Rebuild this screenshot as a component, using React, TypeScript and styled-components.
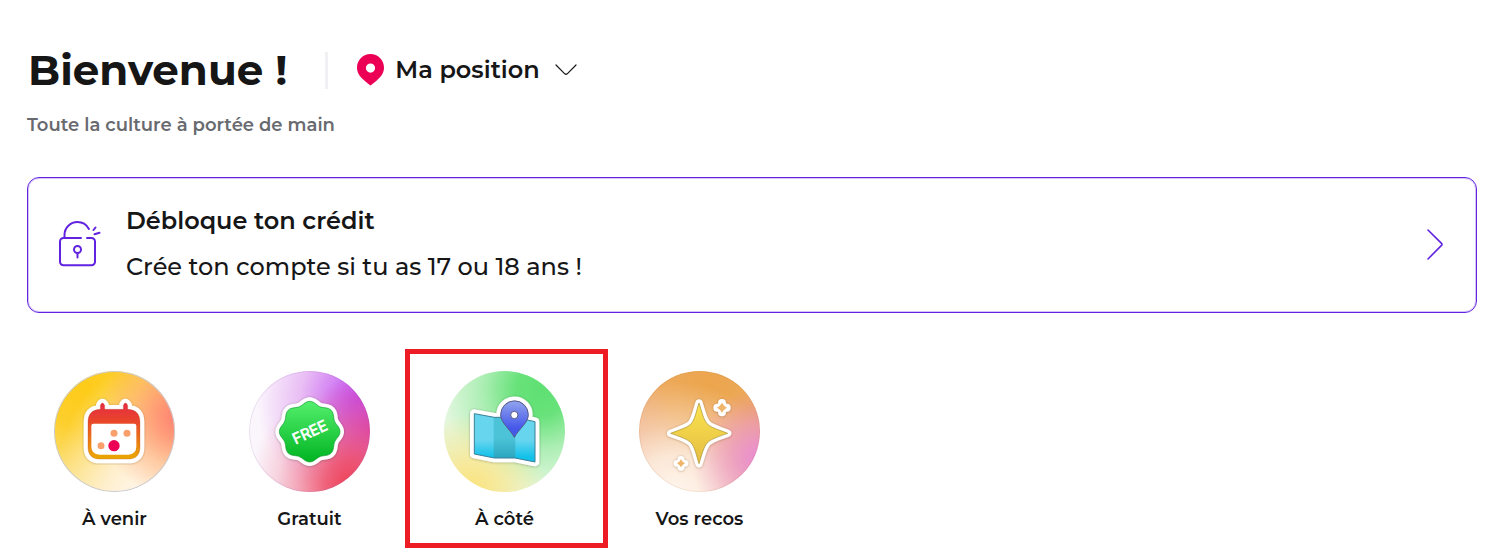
import React from 'react';
import styled, { createGlobalStyle } from 'styled-components';

const GlobalStyle = createGlobalStyle`
  * { box-sizing: border-box; }
  body {
    margin: 0;
    background: #fff;
    color: #161617;
    font-family: Montserrat, Inter, "Liberation Sans", sans-serif;
  }
  button { font: inherit; color: inherit; cursor: pointer; }
  h1, h2, p { margin: 0; }
  svg { display: block; flex: none; }
`;

const Page = styled.main`
  padding: 41px 15px 10px 27px;
`;

const Header = styled.header`
  display: flex;
  align-items: center;
`;

const Title = styled.h1`
  padding-left: 1px;
  font-size: 42px;
  line-height: 58px;
  font-weight: 700;
`;

const LocationButton = styled.button`
  display: flex;
  align-items: center;
  gap: 11px;
  height: 37px;
  margin-left: 38px;
  padding: 0 0 0 29px;
  border: 0;
  border-left: 3px solid #f1f1f4;
  background: none;
  && { font-size: 24px; line-height: 32px; font-weight: 600; }

  svg:last-child { margin-left: 4px; }
`;

const Subtitle = styled.p`
  margin-top: 14px;
  font-size: 18px;
  line-height: 24px;
  font-weight: 600;
  color: #696a6f;
`;

const Banner = styled.button`
  display: flex;
  align-items: center;
  width: 100%;
  min-height: 136px;
  margin-top: 40px;
  padding: 22px 33px 24px 31px;
  border: 1px solid #6123df;
  border-radius: 12px;
  outline: 1px solid #6123df44;
  outline-offset: -2px;
  background: none;
  text-align: left;
`;

const BannerText = styled.span`
  display: flex;
  flex: 1;
  flex-direction: column;
  gap: 14px;
  margin-left: 25px;
`;

const BannerLine = styled.span<{ $strong?: boolean }>`
  font-size: 24px;
  line-height: 32px;
  font-weight: ${({ $strong }) => ($strong ? 600 : 500)};
`;

const Categories = styled.nav`
  display: flex;
  margin: 36px 0 0 -10px;
`;

const Category = styled.button<{ $selected?: boolean }>`
  position: relative;
  display: flex;
  flex-direction: column;
  align-items: center;
  gap: 15px;
  width: 195px;
  padding: 22px 0 17px;
  border: 0;
  background: none;
  && { font-size: 18px; line-height: 24px; font-weight: 600; }

  &::after {
    content: '';
    display: ${({ $selected }) => ($selected ? 'block' : 'none')};
    position: absolute;
    inset: 0 -6px 0 -2px;
    border: 5px solid #ed1c24;
  }
`;

const Disc = styled.span<{ $background: string; $edge?: string }>`
  width: 121px;
  height: 121px;
  overflow: hidden;
  border-radius: 50%;
  background: ${({ $background }) => $background};
  box-shadow: inset 0 0 0 1px ${({ $edge }) => $edge ?? 'transparent'};
`;

const Pin = () => (
  <svg width="27" height="32" viewBox="0 0 27 32" aria-hidden="true">
    <path
      fill="#eb0055"
      fillRule="evenodd"
      d="M13.5 0C6 0 0 6 0 13.6c0 5.6 3 9 6.500 12.200 2.800 2.600 4.500 3.700 5.900 5q1.100 1 2.200 0c1.400-1.300 3.100-2.400 5.900-5C24 22.600 27 19.200 27 13.600 27 6 21 0 13.500 0zm0 9.500a4.600 4.600 0 1 1 0 9.200 4.600 4.600 0 0 1 0-9.200z"
    />
  </svg>
);

const ChevronDown = () => (
  <svg width="22" height="12" viewBox="0 0 22 12" fill="none" stroke="#161617" strokeWidth="1.200" strokeLinecap="round" aria-hidden="true">
    <path d="m1 1 8.800 8.800q1.200 1.100 2.400 0L21 1" />
  </svg>
);

const ChevronRight = () => (
  <svg width="16" height="32" viewBox="0 0 16 32" fill="none" stroke="#6123df" strokeWidth="1.600" strokeLinecap="round" aria-hidden="true">
    <path d="m1 2 13.500 13.400q.9 1 0 2L1 31" />
  </svg>
);

const OpenLock = () => (
  <svg width="42" height="48" viewBox="0 0 42 48" fill="none" stroke="#6123df" strokeWidth="2" strokeLinecap="round" aria-hidden="true">
    <path d="M22 18H4.500A3.500 3.500 0 0 0 1 21.500v20.300a3.500 3.500 0 0 0 3.500 3.500h28a3.500 3.500 0 0 0 3.500-3.500V21.500a3.500 3.500 0 0 0-3.500-3.500H28" />
    <path d="M5.500 18v-3C5.500 7.500 11.500 2 18.500 2c5 0 9 2.700 11.400 6.900M34.500 10l2-2.500M35.500 14.300l5-1.500" />
    <circle cx="18.500" cy="29.500" r="3.500" />
    <path d="M18.500 33v4.500" />
  </svg>
);

const calendarShape =
  'M171 142v-12q6-14 13 0v12h56v-12q6-14 13 0v12c25 1 37 14 37 39v73c0 25-12 37-37 37h-82c-25 0-37-12-37-37v-73c0-25 12-38 37-39z';

const CalendarArt = () => (
  <svg width="121" height="121" viewBox="32 27 363 363" aria-hidden="true">
    <defs>
      <linearGradient id="calendar" x1="0" y1="0" x2="0" y2="1">
        <stop offset="0" stopColor="#e62b45" />
        <stop offset=".3" stopColor="#e8432c" />
        <stop offset="1" stopColor="#eba900" />
      </linearGradient>
      <filter id="calendarShadow"><feDropShadow dx="0" dy="1" stdDeviation="3" floodColor="#7a4b00" floodOpacity=".45" /></filter>
    </defs>
    <path filter="url(#calendarShadow)" stroke="#fff" strokeWidth="26" strokeLinejoin="round" fill="#fff" d={calendarShape} />
    <path fill="url(#calendar)" stroke="#b45021" strokeOpacity=".45" strokeWidth="2" d={calendarShape} />
    <path fill="#fff" d="M150 185h123q6 0 6 6v62q0 25-24 25h-87q-24 0-24-25v-62q0-6 6-6z" />
    <g fill="#f9a06c">
      <circle cx="212" cy="214" r="10.500" />
      <circle cx="251" cy="214" r="10.500" />
      <circle cx="173" cy="251" r="10.500" />
    </g>
    <circle cx="212" cy="251" r="17" fill="#eb0055" />
  </svg>
);

// Badge outline: a circle whose radius swells into eight soft lobes.
const badge = `M${Array.from({ length: 120 }, (_, i) => {
  const angle = (i / 120) * Math.PI * 2;
  const radius = 86 + 5 * Math.cos(8 * angle);
  return `${(212 + radius * Math.cos(angle)).toFixed(1)} ${(209 + radius * Math.sin(angle)).toFixed(1)}`;
}).join('L')}z`;

const FreeArt = () => (
  <svg width="121" height="121" viewBox="30 27 363 363" aria-hidden="true">
    <defs>
      <linearGradient id="free" x1="0" y1="0" x2="0" y2="1">
        <stop offset="0" stopColor="#54ef6d" />
        <stop offset="1" stopColor="#00b421" />
      </linearGradient>
      <filter id="freeShadow"><feDropShadow dx="0" dy="1" stdDeviation="3" floodColor="#333" floodOpacity=".45" /></filter>
    </defs>
    <path filter="url(#freeShadow)" fill="#fff" stroke="#fff" strokeWidth="24" strokeLinejoin="round" d={badge} />
    <path fill="url(#free)" stroke="#109b32" strokeWidth="2" d={badge} />
    <text x="212" y="226" fill="#fff" stroke="#fff" strokeWidth="2" strokeLinejoin="round" fontFamily="Inter, sans-serif" fontSize="45" fontWeight="400" textAnchor="middle" transform="rotate(-25 212 209)">FREE</text>
  </svg>
);

const mapShape = 'M224 208l60 11h62l60 13v121l-60-12h-62l-60-12z';
const mapPin = 'M344 279c-14-26-41-44-41-68a41 41 0 0 1 83 0c0 24-28 42-42 68z';

const MapArt = () => (
  <svg width="121" height="121" viewBox="133 80 363 363" aria-hidden="true">
    <defs>
      <linearGradient id="map" x1="0" y1="0" x2="0" y2="1">
        <stop offset=".55" stopColor="#67d5ee" />
        <stop offset=".9" stopColor="#12c1ea" />
      </linearGradient>
      <linearGradient id="fold" x1="0" y1="0" x2="0" y2="1">
        <stop offset=".5" stopColor="#4dc3d8" />
        <stop offset="1" stopColor="#2aa7c0" />
      </linearGradient>
      <linearGradient id="mapPin" x1="0" y1="0" x2="0" y2="1">
        <stop offset="0" stopColor="#92a4ed" />
        <stop offset=".75" stopColor="#4558ea" />
      </linearGradient>
      <filter id="mapShadow"><feDropShadow dx="0" dy="1" stdDeviation="3" floodColor="#333" floodOpacity=".4" /></filter>
    </defs>
    <g filter="url(#mapShadow)" fill="#fff" stroke="#fff" strokeWidth="26" strokeLinejoin="round">
      <path d={mapShape} />
      <path d={mapPin} />
    </g>
    <path fill="url(#map)" d={mapShape} />
    <path fill="url(#fold)" d="M282 219h65v122h-65z" />
    <path fill="none" stroke="#397f96" strokeWidth="3" d={mapShape} />
    <path fill="url(#mapPin)" stroke="#555887" strokeWidth="3" strokeLinejoin="round" d={mapPin} />
    <circle cx="344" cy="212" r="11" fill="#fff" stroke="#555887" strokeWidth="3" />
  </svg>
);

const bigStar =
  'M210 121c8 24 13 50 26 64 14 12 36 17 60 27-24 9-46 15-60 27-13 14-18 40-26 64-8-24-12-50-25-64-14-12-36-18-60-27 24-10 46-15 60-27 13-14 17-40 25-64z';
const sparkle = 'M0-15Q5-5 15 0Q5 5 0 15Q-5 5-15 0Q-5-5 0-15z';

const SparkleHalo = ({ x, y, r }: { x: number; y: number; r: number }) => (
  <path
    transform={`translate(${x} ${y})`}
    strokeWidth={r * 1.7}
    d={`M0 ${-r}V${r}M${-r} 0H${r}`}
    strokeLinecap="round"
  />
);

const StarsArt = () => (
  <svg width="121" height="121" viewBox="30 25 363 363" aria-hidden="true">
    <defs>
      <linearGradient id="star" x1="0" y1="0" x2="0" y2="1">
        <stop offset="0" stopColor="#fae34e" />
        <stop offset="1" stopColor="#e5bd43" />
      </linearGradient>
      <filter id="starShadow"><feDropShadow dx="0" dy="1" stdDeviation="3" floodColor="#754516" floodOpacity=".5" /></filter>
    </defs>
    <g filter="url(#starShadow)" fill="#fff" stroke="#fff" strokeWidth="22" strokeLinejoin="round">
      <path d={bigStar} />
      <SparkleHalo x={279} y={135} r={14} />
      <SparkleHalo x={156} y={302} r={12} />
    </g>
    <path fill="url(#star)" stroke="#a88e32" strokeWidth="2" strokeLinejoin="round" d={bigStar} />
    <path fill="#efb56b" d={sparkle} transform="translate(279 135)" />
    <path fill="#efb56b" d={sparkle} transform="translate(156 302) scale(.8)" />
  </svg>
);

const categories = [
  {
    label: 'À venir',
    art: <CalendarArt />,
    edge: '#c9cbd2',
    background:
      'radial-gradient(circle at 104% 38%, #ff7d70 0%, #ff8a6fcc 16%, #ff946a66 34%, #ff986a00 56%), radial-gradient(ellipse at 66% 108%, #fff6ea 0%, #fff1d8dd 25%, #fff0cf88 45%, #fff0cf00 72%), radial-gradient(circle at 26% 14%, #fdcb18 0%, #fdcf2d 30%, #fbe69a 78%, #fcefb8 100%)',
  },
  {
    label: 'Gratuit',
    art: <FreeArt />,
    edge: '#8d5ab226',
    background:
      'radial-gradient(circle at 84% 94%, #ef3f55 0%, #ef4a60cc 17%, #f0607477 34%, #f0708033 48%, #f0708000 66%), radial-gradient(circle at 102% 48%, #d236b8 0%, #d23ec099 18%, #d850d000 44%), radial-gradient(circle at 92% 24%, #c04ff2 0%, #cb6ff5cc 22%, #d890f577 42%, #e4b4f800 72%), linear-gradient(100deg, #fbf6fc 14%, #f6dcee 60%, #efc0e6 100%)',
  },
  {
    label: 'À côté',
    art: <MapArt />,
    selected: true,
    background:
      'radial-gradient(circle at 22% 98%, #fbe37c 0%, #fae792cc 20%, #f7edb000 50%), radial-gradient(circle at 80% 16%, #5fe073 0%, #68e27a 18%, #92eaa0aa 42%, #c8f4cb00 70%), #e3f7df',
  },
  {
    label: 'Vos recos',
    art: <StarsArt />,
    edge: '#b6784422',
    background:
      'radial-gradient(circle at 100% 72%, #e98ad4 0%, #ea8fc8aa 18%, #ea94b800 46%), radial-gradient(circle at 30% 104%, #fff8f0 0%, #fdf0e2dd 28%, #fbe4d088 48%, #fbe0c800 76%), radial-gradient(circle at 58% 12%, #eca54c 0%, #eda95a 35%, #ecaa90 80%)',
  },
];

export default function App() {
  return (
    <>
      <GlobalStyle />
      <Page>
        <Header>
          <Title>Bienvenue !</Title>
          <LocationButton type="button">
            <Pin />
            <span>Ma position</span>
            <ChevronDown />
          </LocationButton>
        </Header>
        <Subtitle>Toute la culture à portée de main</Subtitle>
        <Banner type="button">
          <OpenLock />
          <BannerText>
            <BannerLine $strong>Débloque ton crédit</BannerLine>
            <BannerLine>Crée ton compte si tu as 17 ou 18 ans !</BannerLine>
          </BannerText>
          <ChevronRight />
        </Banner>
        <Categories aria-label="Catégories">
          {categories.map(({ label, art, background, edge, selected }) => (
            <Category key={label} type="button" $selected={selected}>
              <Disc $background={background} $edge={edge}>{art}</Disc>
              <span>{label}</span>
            </Category>
          ))}
        </Categories>
      </Page>
    </>
  );
}
